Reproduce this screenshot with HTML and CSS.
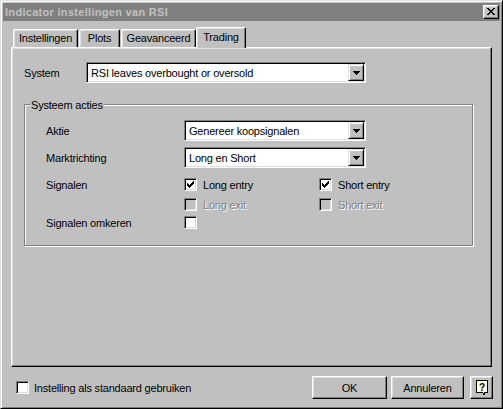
FILE: index.html
```html
<!DOCTYPE html>
<html>
<head>
<meta charset="utf-8">
<title>Indicator instellingen van RSI</title>
<link rel="stylesheet" href="styles.css">
</head>
<body>
<div class="window">
  <div class="titlebar">
    <span class="title">Indicator instellingen van RSI</span>
    <button class="close-btn" aria-label="Sluiten">
      <svg width="8" height="7" viewBox="0 0 8 7" shape-rendering="crispEdges"><path fill="#000" d="M0 0h2v1h-2z M6 0h2v1h-2z M1 1h2v1h-2z M5 1h2v1h-2z M2 2h4v1h-4z M3 3h2v1h-2z M2 4h4v1h-4z M1 5h2v1h-2z M5 5h2v1h-2z M0 6h2v1h-2z M6 6h2v1h-2z"/></svg>
    </button>
  </div>

  <div class="tabs">
    <div class="tab tab-instellingen">Instellingen</div>
    <div class="tab tab-plots">Plots</div>
    <div class="tab tab-geavanceerd">Geavanceerd</div>
    <div class="tab tab-active">Trading</div>
  </div>

  <div class="panel">
    <div class="system-row">
      <span class="system-label">System</span>
      <div class="combo combo-wide">
        <span class="combo-text">RSI leaves overbought or oversold</span>
        <span class="combo-btn"><svg width="7" height="4" viewBox="0 0 7 4" shape-rendering="crispEdges"><path fill="#000" d="M0 0h7v1h-7z M1 1h5v1h-5z M2 2h3v1h-3z M3 3h1v1h-1z"/></svg></span>
      </div>
    </div>

    <div class="group">
      <span class="group-legend">Systeem acties</span>

      <div class="field">
        <span class="field-label">Aktie</span>
        <div class="combo combo-medium">
          <span class="combo-text">Genereer koopsignalen</span>
          <span class="combo-btn"><svg width="7" height="4" viewBox="0 0 7 4" shape-rendering="crispEdges"><path fill="#000" d="M0 0h7v1h-7z M1 1h5v1h-5z M2 2h3v1h-3z M3 3h1v1h-1z"/></svg></span>
        </div>
      </div>

      <div class="field field-second">
        <span class="field-label">Marktrichting</span>
        <div class="combo combo-medium">
          <span class="combo-text">Long en Short</span>
          <span class="combo-btn"><svg width="7" height="4" viewBox="0 0 7 4" shape-rendering="crispEdges"><path fill="#000" d="M0 0h7v1h-7z M1 1h5v1h-5z M2 2h3v1h-3z M3 3h1v1h-1z"/></svg></span>
        </div>
      </div>

      <div class="field check-row row-signalen">
        <span class="field-label">Signalen</span>
        <div class="check">
          <span class="box"><svg width="7" height="7" viewBox="0 0 7 7" shape-rendering="crispEdges"><path fill="#000" d="M0 2h1v3h-1z M1 3h1v3h-1z M2 4h1v3h-1z M3 3h1v3h-1z M4 2h1v3h-1z M5 1h1v3h-1z M6 0h1v3h-1z"/></svg></span>
          <span>Long entry</span>
        </div>
        <div class="check">
          <span class="box"><svg width="7" height="7" viewBox="0 0 7 7" shape-rendering="crispEdges"><path fill="#000" d="M0 2h1v3h-1z M1 3h1v3h-1z M2 4h1v3h-1z M3 3h1v3h-1z M4 2h1v3h-1z M5 1h1v3h-1z M6 0h1v3h-1z"/></svg></span>
          <span>Short entry</span>
        </div>
      </div>

      <div class="field check-row row-exit">
        <span class="field-label"></span>
        <div class="check check-disabled">
          <span class="box box-disabled"></span>
          <span>Long exit</span>
        </div>
        <div class="check check-disabled">
          <span class="box box-disabled"></span>
          <span>Short exit</span>
        </div>
      </div>

      <div class="field check-row row-omkeren">
        <span class="field-label">Signalen omkeren</span>
        <div class="check">
          <span class="box"></span>
        </div>
      </div>
    </div>
  </div>

  <div class="footer">
    <div class="default-check">
      <span class="box"></span>
      <span class="default-label">Instelling als standaard gebruiken</span>
    </div>
    <div class="buttons">
      <button class="btn btn-ok">OK</button>
      <button class="btn btn-cancel">Annuleren</button>
      <button class="btn btn-help" aria-label="Help">
        <svg width="13" height="16" viewBox="0 0 13 16"><path d="M0.5 0.5h11v12h-2.5l-1 2.5l-1.5 -2.5h-6z" fill="#ffffe1" stroke="#000" stroke-width="1" shape-rendering="crispEdges"/><text x="6" y="10.5" text-anchor="middle" class="help-q">?</text></svg>
      </button>
    </div>
  </div>
</div>
</body>
</html>
```

FILE: styles.css
```css
* {
  box-sizing: border-box;
}

html,
body {
  margin: 0;
  padding: 0;
}

body {
  width: 503px;
  height: 409px;
  background: #c0c0c0;
  font-family: "Liberation Sans", Arial, sans-serif;
  font-size: 11px;
  letter-spacing: -0.2px;
  color: #000;
  overflow: hidden;
}

button {
  font: inherit;
  letter-spacing: inherit;
  color: inherit;
  margin: 0;
  padding: 0;
  -webkit-appearance: none;
  appearance: none;
  background: #c0c0c0;
}

.window {
  width: 503px;
  height: 409px;
  background: #c0c0c0;
  border: 1px solid;
  border-color: #dfdfdf #000 #000 #dfdfdf;
  box-shadow: inset 1px 1px 0 #fff, inset -1px -1px 0 #808080;
  padding: 2px;
  display: flex;
  flex-direction: column;
}

/* Title bar */
.titlebar {
  height: 18px;
  flex: none;
  background: #808080;
  color: #c0c0c0;
  font-weight: bold;
  letter-spacing: 0.3px;
  display: flex;
  align-items: center;
  padding: 0 1px 0 2px;
}

.title {
  flex: 1;
  line-height: 13px;
}

.close-btn {
  width: 16px;
  height: 14px;
  border: 1px solid;
  border-color: #fff #000 #000 #fff;
  box-shadow: inset -1px -1px 0 #808080, inset 1px 1px 0 #dfdfdf;
  display: flex;
  align-items: center;
  justify-content: center;
  padding: 0 0 1px 0;
}

.close-btn svg {
  display: block;
}

/* Tabs */
.tabs {
  flex: none;
  height: 20px;
  margin: 6px 8px 0 8px;
  padding-left: 2px;
  display: flex;
  align-items: flex-end;
}

.tab {
  height: 18px;
  line-height: 17px;
  text-align: center;
  background: #c0c0c0;
  border-top: 1px solid #fff;
  border-left: 1px solid #fff;
  border-right: 1px solid #000;
  border-radius: 2px 2px 0 0;
  box-shadow: inset -1px 0 0 #808080, inset 1px 1px 0 #dfdfdf;
  white-space: nowrap;
}

.tab-instellingen {
  width: 65px;
  margin-right: 1px;
}

.tab-plots {
  width: 41px;
  margin-right: 1px;
}

.tab-geavanceerd {
  width: 75px;
}

.tab-active {
  width: 50px;
  height: 21px;
  line-height: 18px;
  margin-bottom: -1px;
  position: relative;
  z-index: 1;
  box-shadow: inset -1px 0 0 #808080, inset 1px 1px 0 #dfdfdf;
}

/* Panel */
.panel {
  flex: none;
  height: 320px;
  margin: 0 8px;
  border: 1px solid;
  border-color: #fff #000 #000 #fff;
  box-shadow: inset -1px -1px 0 #808080, inset 1px 1px 0 #dfdfdf;
  padding: 14px 0 0 12px;
}

.system-row {
  display: flex;
  align-items: center;
}

.system-label {
  width: 62px;
}

/* Combo box */
.combo {
  height: 21px;
  background: #fff;
  border: 1px solid;
  border-color: #808080 #fff #fff #808080;
  box-shadow: inset 1px 1px 0 #000, inset -1px -1px 0 #dfdfdf;
  display: flex;
  align-items: center;
  padding: 1px;
}

.combo-wide {
  width: 280px;
}

.combo-medium {
  width: 182px;
}

.combo-text {
  flex: 1;
  padding-left: 3px;
  white-space: nowrap;
  overflow: hidden;
}

.combo-btn {
  width: 16px;
  height: 17px;
  background: #c0c0c0;
  border: 1px solid;
  border-color: #dfdfdf #000 #000 #dfdfdf;
  box-shadow: inset 1px 1px 0 #fff, inset -1px -1px 0 #808080;
  display: flex;
  align-items: center;
  justify-content: center;
  padding-top: 1px;
}

.combo-btn svg {
  display: block;
}

/* Group box */
.group {
  position: relative;
  width: 449px;
  margin-top: 21px;
  border: 1px solid #808080;
  box-shadow: 1px 1px 0 #fff, inset 1px 1px 0 #fff;
  padding: 15px 0 16px 21px;
}

.group-legend {
  position: absolute;
  top: -6px;
  left: 5px;
  padding: 0 1px;
  line-height: 13px;
  background: #c0c0c0;
}

.field {
  display: flex;
  align-items: center;
}

.field-second {
  margin-top: 6px;
}

.field-label {
  width: 138px;
  flex: none;
}

.check-row {
  height: 13px;
}

.row-signalen {
  margin-top: 10px;
}

.row-exit {
  margin-top: 7px;
}

.row-omkeren {
  margin-top: 5px;
}

.check {
  width: 135px;
  display: flex;
  align-items: center;
  white-space: nowrap;
}

.check-disabled {
  color: #808080;
  text-shadow: 1px 1px 0 #fff;
}

/* Checkbox */
.box {
  width: 13px;
  height: 13px;
  flex: none;
  margin-right: 6px;
  background: #fff;
  border: 1px solid;
  border-color: #808080 #fff #fff #808080;
  box-shadow: inset 1px 1px 0 #000, inset -1px -1px 0 #dfdfdf;
  display: flex;
  align-items: center;
  justify-content: center;
}

.box svg {
  display: block;
}

.box-disabled {
  background: #c0c0c0;
}

/* Footer */
.footer {
  flex: none;
  height: 23px;
  margin-top: 9px;
  padding: 0 7px 0 13px;
  display: flex;
  align-items: center;
}

.default-check {
  display: flex;
  align-items: center;
  white-space: nowrap;
}

.default-check .box {
  margin-right: 5px;
}

.buttons {
  margin-left: auto;
  display: flex;
}

.btn {
  height: 23px;
  width: 75px;
  border: 1px solid;
  border-color: #fff #000 #000 #fff;
  box-shadow: inset -1px -1px 0 #808080, inset 1px 1px 0 #dfdfdf;
  text-align: center;
  display: flex;
  align-items: center;
  justify-content: center;
}

.btn-cancel {
  width: 73px;
  margin-left: 4px;
}

.btn-help {
  width: 23px;
  margin-left: 6px;
  padding: 1px 0 0 1px;
}

.btn-help svg {
  display: block;
}

.help-q {
  font-family: "Liberation Sans", Arial, sans-serif;
  font-size: 10px;
  font-weight: bold;
  fill: #000;
}
```
